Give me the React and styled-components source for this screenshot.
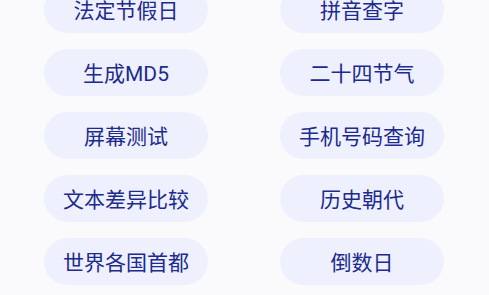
import React from 'react'
import styled, { createGlobalStyle } from 'styled-components'

const GlobalStyle = createGlobalStyle`
    html, body {
        margin: 0;
        padding: 0;
        background-color: #fafafc;
        overflow: hidden;
    }
    body {
        font-family: Roboto, "Noto Sans CJK SC", sans-serif;
    }
`

const Page = styled.div`
    width: 489px;
    height: 295px;
    overflow: hidden;
    background-color: #fafafc;
`

const Grid = styled.div`
    display: grid;
    grid-template-columns: 164px 164px;
    column-gap: 72px;
    row-gap: 16px;
    padding-left: 44px;
    margin-top: -14px;
`

const ToolButton = styled.button`
    height: 47px;
    border: none;
    border-radius: 24px;
    background-color: #eef0fe;
    color: #1c2b8c;
    font-family: Roboto, "Noto Sans CJK SC", sans-serif;
    font-size: 21px;
    font-weight: 400;
    padding: 0 0 2px;
    display: flex;
    align-items: center;
    justify-content: center;
    cursor: pointer;
`

const tools = [
    '法定节假日', '拼音查字',
    '生成MD5', '二十四节气',
    '屏幕测试', '手机号码查询',
    '文本差异比较', '历史朝代',
    '世界各国首都', '倒数日',
]

function App() {
    return (
        <Page>
            <GlobalStyle />
            <Grid>
                {tools.map((name) => (
                    <ToolButton key={name}>{name}</ToolButton>
                ))}
            </Grid>
        </Page>
    )
}

export default App
